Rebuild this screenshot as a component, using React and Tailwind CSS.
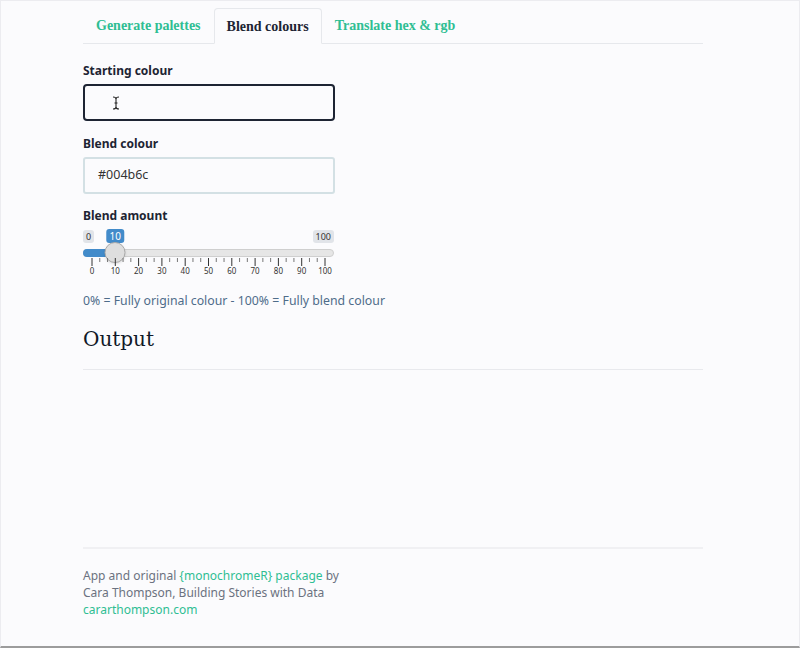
import React from "react";

const tabs = ["Generate palettes", "Blend colours", "Translate hex & rgb"];
const majors = [0, 10, 20, 30, 40, 50, 60, 70, 80, 90, 100];

function Slider() {
  // grid runs from x=9 to x=242 inside the 251px wide slider
  const left = 9;
  const span = 233;
  const pos = (v) => left + (span * v) / 100;
  const smalls = [];
  for (let i = 0; i < 100; i += 10) {
    smalls.push(i + 10 / 3, i + 20 / 3);
  }
  return (
    <div className="relative h-[50px] w-[251px]">
      <span className="absolute left-0 top-[1px] rounded-[3px] bg-[#e1e4e9] px-[3px] text-[9px] leading-[13px] text-[#333]">0</span>
      <span className="absolute right-0 top-[1px] rounded-[3px] bg-[#e1e4e9] px-[3px] text-[9px] leading-[13px] text-[#333]">100</span>
      <span
        className="absolute top-0 -translate-x-1/2 rounded-[3px] bg-[#428bca] px-[3px] text-[10px] leading-[14px] text-white"
        style={{ left: pos(10) }}
      >
        10
      </span>
      <div className="absolute left-0 right-0 top-[20px] h-[8px] rounded-full border border-[#cfcfcf] bg-[#e6e6e6]" />
      <div className="absolute left-0 top-[20px] h-[8px] rounded-l-full bg-[#428bca]" style={{ width: pos(10) }} />
      <div
        className="absolute top-[13px] h-[21px] w-[21px] -translate-x-1/2 rounded-full border border-[#aaa] bg-[#dedede] shadow-sm"
        style={{ left: pos(10) }}
      />
      <svg className="absolute left-0 top-[28px]" width="251" height="10">
        {majors.map((v) => (
          <line key={v} x1={pos(v)} x2={pos(v)} y1="1" y2="9" stroke="#333" strokeWidth="1" />
        ))}
        {smalls.map((v) => (
          <line key={v} x1={pos(v)} x2={pos(v)} y1="1" y2="5" stroke="#777" strokeWidth="1" />
        ))}
      </svg>
      {majors.map((v) => (
        <span
          key={v}
          className="absolute top-[37px] -translate-x-1/2 text-[8px] leading-[10px] text-[#333]"
          style={{ left: pos(v) }}
        >
          {v}
        </span>
      ))}
    </div>
  );
}

function IBeam() {
  return (
    <svg width="8" height="14" viewBox="0 0 8 14" className="ml-[27px]">
      <path d="M1 1 Q4 1 4 3 Q4 1 7 1 M4 3 V11 M1 13 Q4 13 4 11 Q4 13 7 13 M2.5 7 H5.5" fill="none" stroke="#222" strokeWidth="1.1" />
    </svg>
  );
}

export default function App() {
  return (
    <div
      className="flex h-[648px] w-[800px] flex-col border-x border-t border-b-2 border-x-[#ececf0] border-t-[#ececf0] border-b-[#9c9c9c] bg-[#fbfbfd] text-[#1d2433]"
      style={{ fontFamily: "'Noto Sans', 'Liberation Sans', sans-serif" }}
    >
      <div className="ml-[82px] flex w-[620px] flex-col">
        {/* tabs */}
        <div className="mt-[7px] flex border-b border-[#e6e8ec]" style={{ fontFamily: "'Liberation Serif', serif" }}>
          {tabs.map((t) => (
            <div
              key={t}
              className={
                t === "Blend colours"
                  ? "-mb-px flex h-[36px] items-center rounded-t-[4px] border border-b-transparent border-[#e6e8ec] bg-[#fbfbfd] px-[12px] text-[14px] font-bold text-[#1d2433]"
                  : "flex h-[35px] items-center px-[13px] text-[14px] font-bold text-[#2fbe93]"
              }
            >
              {t}
            </div>
          ))}
        </div>

        <div className="mt-[18px] text-[12px] font-bold leading-[18px]">Starting colour</div>
        <div className="mt-[4px] flex h-[37px] w-[252px] items-center rounded-[4px] border-2 border-[#1d2433] bg-[#fbfbfd]">
          <IBeam />
        </div>

        <div className="mt-[14px] text-[12px] font-bold leading-[18px]">Blend colour</div>
        <div className="mt-[4px] flex h-[37px] w-[252px] items-center rounded-[3px] border-2 border-[#d3e0e4] bg-[#fbfbfd] pl-[13px] text-[12.5px] text-[#333]">
          #004b6c
        </div>

        <div className="mt-[13px] text-[12px] font-bold leading-[18px]">Blend amount</div>
        <div className="mt-[4px]">
          <Slider />
        </div>

        <p className="mt-[13px] text-[12.3px] leading-[18px] text-[#4e6c8a]">
          0% = Fully original colour - 100% = Fully blend colour
        </p>

        <h2 className="mt-[15px] text-[20px] leading-[28px] text-[#111827]" style={{ fontFamily: "'DejaVu Serif', serif" }}>
          Output
        </h2>
        <div className="mt-[16px] border-t border-[#e8e9ed]" />

        <div className="mt-[177px] border-t-2 border-[#f0f0f3]" />
        <div className="mt-[18px] text-[12px] leading-[17px] text-[#6b7280]">
          <p>
            App and original <span className="text-[#2fbe93]">{"{monochromeR}"} package</span> by
          </p>
          <p>Cara Thompson, Building Stories with Data</p>
          <p className="text-[#2fbe93]">cararthompson.com</p>
        </div>
      </div>
    </div>
  );
}
